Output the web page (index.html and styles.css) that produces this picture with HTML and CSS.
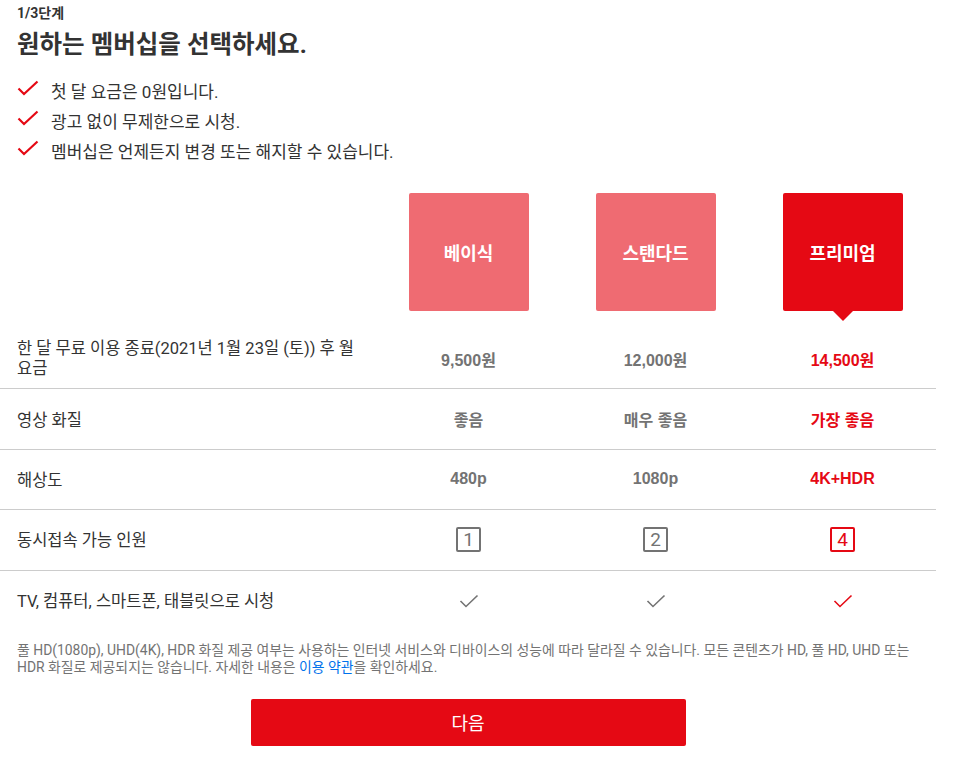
FILE: index.html
```html
<!DOCTYPE html>
<html lang="ko">
<head>
<meta charset="utf-8">
<title>멤버십 선택</title>
<link rel="stylesheet" href="styles.css">
</head>
<body>
<div class="page">
  <div class="step">1/3단계</div>
  <h1 class="title">원하는 멤버십을 선택하세요.</h1>
  <ul class="checklist">
    <li><svg class="chk" viewBox="0 0 22 16" width="22" height="16"><path d="M1.5 8.5 L7 14 L20.5 1.5" fill="none" stroke="#e50914" stroke-width="2.2"/></svg>첫 달 요금은 0원입니다.</li>
    <li><svg class="chk" viewBox="0 0 22 16" width="22" height="16"><path d="M1.5 8.5 L7 14 L20.5 1.5" fill="none" stroke="#e50914" stroke-width="2.2"/></svg>광고 없이 무제한으로 시청.</li>
    <li><svg class="chk" viewBox="0 0 22 16" width="22" height="16"><path d="M1.5 8.5 L7 14 L20.5 1.5" fill="none" stroke="#e50914" stroke-width="2.2"/></svg>멤버십은 언제든지 변경 또는 해지할 수 있습니다.</li>
  </ul>

  <div class="plans">
    <div class="row head">
      <div class="label"></div>
      <div class="cell"><div class="plan">베이식</div></div>
      <div class="cell"><div class="plan">스탠다드</div></div>
      <div class="cell"><div class="plan active">프리미엄</div></div>
    </div>
    <div class="row">
      <div class="label multi">한 달 무료 이용 종료(2021년 1월 23일 (토)) 후 월<br>요금</div>
      <div class="cell val">9,500원</div>
      <div class="cell val">12,000원</div>
      <div class="cell val on">14,500원</div>
    </div>
    <div class="row">
      <div class="label">영상 화질</div>
      <div class="cell val">좋음</div>
      <div class="cell val">매우 좋음</div>
      <div class="cell val on">가장 좋음</div>
    </div>
    <div class="row">
      <div class="label">해상도</div>
      <div class="cell val">480p</div>
      <div class="cell val">1080p</div>
      <div class="cell val on">4K+HDR</div>
    </div>
    <div class="row">
      <div class="label">동시접속 가능 인원</div>
      <div class="cell"><span class="num">1</span></div>
      <div class="cell"><span class="num">2</span></div>
      <div class="cell"><span class="num on">4</span></div>
    </div>
    <div class="row last">
      <div class="label">TV, 컴퓨터, 스마트폰, 태블릿으로 시청</div>
      <div class="cell"><svg viewBox="0 0 20 14" width="20" height="14"><path d="M1.5 7 L7 12.5 L18.5 1.5" fill="none" stroke="#737373" stroke-width="1.6"/></svg></div>
      <div class="cell"><svg viewBox="0 0 20 14" width="20" height="14"><path d="M1.5 7 L7 12.5 L18.5 1.5" fill="none" stroke="#737373" stroke-width="1.6"/></svg></div>
      <div class="cell"><svg viewBox="0 0 20 14" width="20" height="14"><path d="M1.5 7 L7 12.5 L18.5 1.5" fill="none" stroke="#e50914" stroke-width="1.6"/></svg></div>
    </div>
  </div>

  <p class="note">풀 HD(1080p), UHD(4K), HDR 화질 제공 여부는 사용하는 인터넷 서비스와 디바이스의 성능에 따라 달라질 수 있습니다. 모든 콘텐츠가 HD, 풀 HD, UHD 또는 HDR 화질로 제공되지는 않습니다. 자세한 내용은 <a href="#">이용 약관</a>을 확인하세요.</p>

  <div class="actions"><button class="next">다음</button></div>
</div>
</body>
</html>
```

FILE: styles.css
```css
* { box-sizing: border-box; }
body {
  margin: 0;
  background: #fff;
  color: #333;
  font-family: Roboto, "Noto Sans CJK KR", sans-serif;
}
.page {
  width: 936px;
  padding-top: 4px;
}
.step {
  margin-left: 17px;
  font-size: 14px;
  font-weight: 700;
  line-height: 18px;
}
.title {
  margin: 7px 0 0 17px;
  font-size: 24.5px;
  font-weight: 700;
  line-height: 32px;
}
.checklist {
  list-style: none;
  margin: 14px 0 0 17px;
  padding: 0;
}
.checklist li {
  display: flex;
  align-items: center;
  height: 30px;
  font-size: 17px;
}
.chk {
  margin-right: 12px;
  margin-top: -4px;
}
.plans {
  margin-top: 28px;
}
.row {
  display: flex;
  height: 60.4px;
  border-bottom: 1px solid #ccc;
  align-items: center;
}
.row.head {
  height: 136px;
  border-bottom: none;
  align-items: flex-start;
}
.row.last {
  border-bottom: none;
}
.label {
  width: 375px;
  padding: 3px 17px 0;
  font-size: 16.5px;
  line-height: 20px;
}
.label.multi {
  padding-top: 1px;
}
.cell {
  flex: 1;
  display: flex;
  justify-content: center;
  align-items: center;
}
.plan {
  position: relative;
  width: 120px;
  height: 118px;
  border-radius: 2px;
  background: #ef6b72;
  color: #fff;
  font-size: 18px;
  font-weight: 700;
  display: flex;
  align-items: center;
  justify-content: center;
}
.plan.active {
  background: #e50914;
}
.plan.active::after {
  content: "";
  position: absolute;
  left: 50%;
  top: 100%;
  margin-left: -10px;
  border-left: 10px solid transparent;
  border-right: 10px solid transparent;
  border-top: 10px solid #e50914;
}
.val {
  color: #737373;
  font-family: "Liberation Sans", "Noto Sans CJK KR", sans-serif;
  font-size: 16px;
  font-weight: 700;
}
.val.on { color: #e50914; }
.num {
  display: inline-flex;
  align-items: center;
  justify-content: center;
  width: 25px;
  height: 25px;
  border: 2px solid #737373;
  border-radius: 2px;
  color: #737373;
  font-size: 19px;
  line-height: 1;
}
.num.on {
  border-color: #e50914;
  color: #e50914;
}
.note {
  max-width: 900px;
  margin: 11px 0 0 17px;
  font-size: 13.9px;
  line-height: 17px;
  color: #737373;
}
.note a {
  color: #0071eb;
  text-decoration: none;
}
.actions {
  display: flex;
  justify-content: center;
  margin-top: 23px;
}
.next {
  width: 435px;
  height: 47px;
  border: none;
  border-radius: 2px;
  background: #e50914;
  color: #fff;
  font-family: Roboto, "Noto Sans CJK KR", sans-serif;
  font-size: 18px;
}
```
